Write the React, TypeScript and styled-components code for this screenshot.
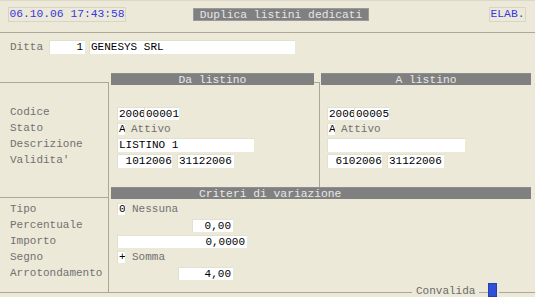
import styled, { createGlobalStyle } from 'styled-components';

const bg = '#ece9d8';
const rule = '#aca899';
const bar = '#808080';

const GlobalStyle = createGlobalStyle`
  *, *::before, *::after { box-sizing: border-box; }
  html, body { margin: 0; padding: 0; background: ${bg}; }
  body {
    font-family: "Liberation Mono", "Courier New", monospace;
    font-size: 11px;
    color: #000;
  }
`;

const Screen = styled.div`
  position: relative;
  width: 535px;
  height: 297px;
  overflow: hidden;
  background: ${bg};
  box-shadow: inset 0 1px 0 #dcd8c8;
  display: flex;
  flex-direction: column;
`;

/* top bar: clock, title, status */
const TopBar = styled.div`
  height: 33px;
  flex: none;
  border-bottom: 1px solid ${rule};
  display: flex;
  align-items: flex-start;
  padding: 7px 0 0 8px;
`;

const Clock = styled.div`
  width: 118px;
  height: 15px;
  line-height: 13px;
  border: 1px solid #d9d5c6;
  color: #3636e6;
  font-size: 11.3px;
  text-align: center;
`;

const Title = styled.div`
  margin: 1px 0 0 67px;
  width: 176px;
  height: 13px;
  line-height: 12px;
  background: ${bar};
  border: 1px solid #9a9a9a;
  color: #e6e6e6;
  font-size: 11.3px;
  text-align: center;
`;

const Status = styled(Clock)`
  width: 37px;
  margin-left: auto;
  margin-right: 9px;
`;

const DittaRow = styled.div`
  display: flex;
  align-items: center;
  height: 14px;
  flex: none;
  margin-top: 7px;
  padding-left: 10px;
`;

const Label = styled.span<{ $w?: number }>`
  color: #717171;
  width: ${p => (p.$w ? `${p.$w}px` : 'auto')};
  flex: none;
`;

const Hint = styled.span`
  color: #717171;
`;

const Box = styled.span<{ $w: number; $h?: number; $ml?: number; $right?: boolean }>`
  display: inline-block;
  flex: none;
  width: ${p => p.$w}px;
  height: ${p => p.$h ?? 14}px;
  line-height: ${p => (p.$h ?? 14) - 1}px;
  margin-left: ${p => p.$ml ?? 0}px;
  padding: 0 ${p => (p.$right ? 2 : 0)}px 0 1px;
  background: #fff;
  border-top: 1px solid #e2dfd3;
  border-left: 1px solid #e2dfd3;
  text-align: ${p => (p.$right ? 'right' : 'left')};
  white-space: pre;
  overflow: hidden;
`;

const Section = styled.div<{ $h: number; $closed?: boolean }>`
  display: flex;
  height: ${p => p.$h}px;
  flex: none;
  border-bottom: ${p => (p.$closed ? `1px solid ${rule}` : 'none')};
`;

const LabelCol = styled.div<{ $drop: number; $through?: boolean }>`
  width: 109px;
  flex: none;
  border-right: 1px solid ${rule};
  margin-top: ${p => (p.$through ? 0 : p.$drop)}px;
  padding-top: ${p => (p.$through ? p.$drop : 0)}px;
`;

const Rule = styled.div`
  border-top: 1px solid ${rule};
`;

const Rows = styled.div<{ $top: number }>`
  padding: ${p => p.$top}px 0 0 10px;
`;

const FieldRows = styled.div<{ $top: number }>`
  padding: ${p => p.$top}px 0 0 6px;
`;

const Row = styled.div<{ $gap?: number }>`
  display: flex;
  align-items: center;
  height: 16px;
  gap: ${p => p.$gap ?? 0}px;
`;

const Column = styled.div<{ $w: number; $ml: number }>`
  width: ${p => p.$w}px;
  margin-left: ${p => p.$ml}px;
  flex: none;
`;

const Header = styled.div<{ $indent?: number }>`
  height: 12px;
  line-height: 12px;
  background: ${bar};
  border-top: 1px solid #8e8e8e;
  color: #e8e8e8;
  font-size: 11.3px;
  text-align: ${p => (p.$indent ? 'left' : 'center')};
  padding-left: ${p => p.$indent ?? 0}px;
`;

const Joint = styled.div`
  width: 6px;
  flex: none;
  margin-top: 9px;
  border-top: 1px solid ${rule};
  border-right: 1px solid ${rule};
`;

const Spacer = styled.div<{ $h: number }>`
  height: ${p => p.$h}px;
  flex: none;
`;

/* legend that sits on the bottom frame line */
const Legend = styled.div`
  position: absolute;
  left: 412px;
  top: 283px;
  height: 14px;
  display: flex;
  align-items: center;
`;

const LegendText = styled.span`
  background: ${bg};
  color: #6a6a6a;
  padding: 0 4px;
  line-height: 12px;
  margin-top: 1px;
`;

const Confirm = styled.span`
  width: 9px;
  height: 14px;
  margin-left: 9px;
  background: #3050d8;
  border: 1px solid #2a3fa8;
  box-shadow: 1px 0 0 ${bg}, 2px 0 0 ${bg};
`;

type Side = { code: string; desc: string; from: string; to: string };

const da: Side = { code: '00001', desc: 'LISTINO 1', from: ' 1012006', to: '31122006' };
const a: Side = { code: '00005', desc: '', from: ' 6102006', to: '31122006' };

function Listino({ title, side, w, ml }: { title: string; side: Side; w: number; ml: number }) {
  return (
    <Column $w={w} $ml={ml}>
      <Header>{title}</Header>
      <FieldRows $top={20}>
        <Row>
          <Box $w={27} $h={13}>2006</Box>
          <Box $w={35} $h={13}>{side.code}</Box>
        </Row>
        <Row $gap={6}>
          <Box $w={8} $h={12}>A</Box>
          <Hint>Attivo</Hint>
        </Row>
        <Row>
          <Box $w={side.desc ? 137 : 138}>{side.desc}</Box>
        </Row>
        <Row $gap={5}>
          <Box $w={55}>{side.from}</Box>
          <Box $w={57}>{side.to}</Box>
        </Row>
      </FieldRows>
    </Column>
  );
}

export default function App() {
  return (
    <Screen>
      <GlobalStyle />
      <TopBar>
        <Clock>06.10.06 17:43:58</Clock>
        <Title>Duplica listini dedicati</Title>
        <Status>ELAB.</Status>
      </TopBar>

      <DittaRow>
        <Label $w={39}>Ditta</Label>
        <Box $w={36} $right>1</Box>
        <Box $w={206} $ml={4}>GENESYS SRL</Box>
      </DittaRow>

      <Spacer $h={19} />

      <Section $h={114}>
        <LabelCol $drop={9}>
          <Rule />
          <Rows $top={21}>
            <Row><Label>Codice</Label></Row>
            <Row><Label>Stato</Label></Row>
            <Row><Label>Descrizione</Label></Row>
            <Row><Label>Validita'</Label></Row>
          </Rows>
        </LabelCol>
        <Listino title="Da listino" side={da} w={203} ml={2} />
        <Joint />
        <Listino title="A listino" side={a} w={210} ml={1} />
      </Section>

      <Section $h={106} $closed>
        <LabelCol $drop={10} $through>
          <Rule />
          <Rows $top={3}>
            <Row><Label>Tipo</Label></Row>
            <Row><Label>Percentuale</Label></Row>
            <Row><Label>Importo</Label></Row>
            <Row><Label>Segno</Label></Row>
            <Row><Label>Arrotondamento</Label></Row>
          </Rows>
        </LabelCol>
        <Column $w={420} $ml={2}>
          <Header $indent={88}>Criteri di variazione</Header>
          <FieldRows $top={2}>
            <Row $gap={7}>
              <Box $w={8} $h={12}>0</Box>
              <Hint>Nessuna</Hint>
            </Row>
            <Row>
              <Box $w={41} $h={13} $ml={75} $right>0,00</Box>
            </Row>
            <Row>
              <Box $w={130} $h={13} $right>0,0000</Box>
            </Row>
            <Row $gap={7}>
              <Box $w={8} $h={12}>+</Box>
              <Hint>Somma</Hint>
            </Row>
            <Row>
              <Box $w={55} $h={13} $ml={61} $right>4,00</Box>
            </Row>
          </FieldRows>
        </Column>
      </Section>

      <Legend>
        <LegendText>Convalida</LegendText>
        <Confirm />
      </Legend>
    </Screen>
  );
}
